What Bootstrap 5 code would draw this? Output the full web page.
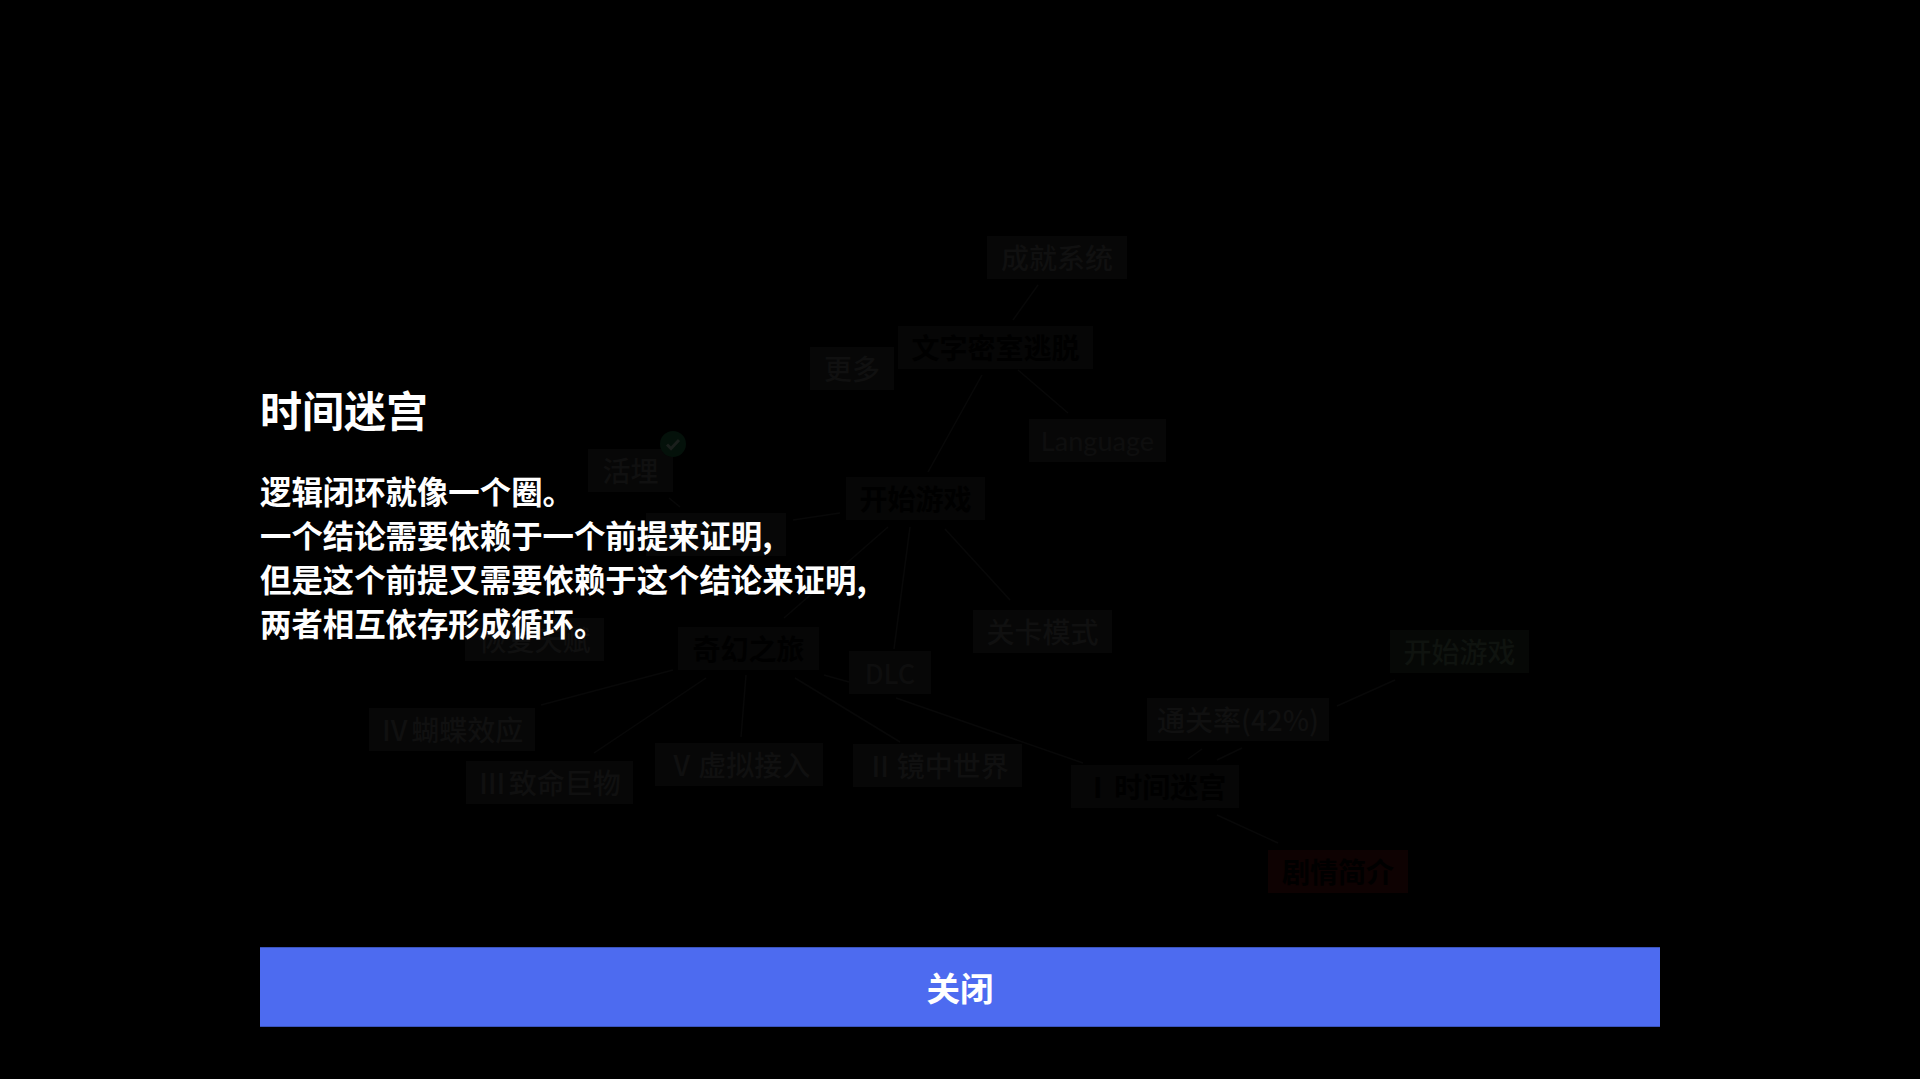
<!DOCTYPE html>
<html lang="zh-CN">
<head>
<meta charset="utf-8">
<title>时间迷宫</title>
<link href="https://cdn.jsdelivr.net/npm/bootstrap@5.3.0/dist/css/bootstrap.min.css" rel="stylesheet">
<style>
html,body{height:100%;background:#000;overflow:hidden;}
body{font-family:"Noto Sans CJK SC","Liberation Sans",sans-serif;color:#fff;}
.stage{width:1920px;height:1079px;background:#000;}
.wires{left:0;top:0;width:1920px;height:1079px;}
.wires line{stroke:#080808;stroke-width:1.5;}
.gnode{height:43px;background:#070707;color:#101010;font-size:28px;line-height:43px;font-weight:500;text-align:center;white-space:nowrap;word-spacing:-4px;}
.gnode.sunk{color:#000;font-weight:700;background:#060606;}
.gnode.faint{color:#0e0e0e;font-size:27px;}
.gnode.win{background:#060806;color:#0f130f;}
.gnode.lose{background:#0e0202;color:#000;font-weight:700;}
.tick{width:26px;height:26px;left:660px;top:431px;background:#04110a;}
.veil{inset:0;z-index:5;}
.sheet{width:1400px;height:1079px;padding-top:385px;padding-bottom:52px;}
.sheet-title{font-size:42px;line-height:48px;font-weight:700;margin:0 0 36px;}
.sheet-copy{font-size:31.4px;line-height:44px;font-weight:700;margin:0;}
.btn.shut{height:80px;background:#4d6bf0;color:#fff;border:0;border-top:1px solid #3a54bd;border-bottom:1px solid #3a54bd;font-size:33.5px;font-weight:700;line-height:1;}
</style>
</head>
<body>
<div class="stage position-relative">
  <svg class="wires position-absolute" viewBox="0 0 1920 1079">
    <line x1="1038" y1="285" x2="1013" y2="320"/>
    <line x1="982" y1="375" x2="928" y2="472"/>
    <line x1="1018" y1="370" x2="1068" y2="413"/>
    <line x1="840" y1="513" x2="793" y2="520"/>
    <line x1="669" y1="498" x2="680" y2="507"/>
    <line x1="888" y1="527" x2="784" y2="618"/>
    <line x1="910" y1="527" x2="894" y2="649"/>
    <line x1="945" y1="529" x2="1010" y2="600"/>
    <line x1="673" y1="670" x2="541" y2="705"/>
    <line x1="706" y1="678" x2="594" y2="753"/>
    <line x1="746" y1="675" x2="741" y2="737"/>
    <line x1="795" y1="678" x2="900" y2="742"/>
    <line x1="824" y1="675" x2="849" y2="682"/>
    <line x1="896" y1="698" x2="1083" y2="763"/>
    <line x1="1395" y1="680" x2="1337" y2="706"/>
    <line x1="1202" y1="749" x2="1188" y2="759"/>
    <line x1="1242" y1="748" x2="1217" y2="760"/>
    <line x1="1217" y1="815" x2="1278" y2="843"/>
  </svg>
  <div class="gnode position-absolute" style="left:987px;top:236px;width:140px">成就系统</div>
  <div class="gnode sunk position-absolute" style="left:898px;top:326px;width:195px">文字密室逃脱</div>
  <div class="gnode position-absolute" style="left:810px;top:347px;width:84px">更多</div>
  <div class="gnode faint position-absolute" style="left:1029px;top:419px;width:137px;font-family:'Lato',sans-serif">Language</div>
  <div class="gnode sunk position-absolute" style="left:846px;top:477px;width:139px">开始游戏</div>
  <div class="gnode position-absolute" style="left:588px;top:449px;width:85px">活埋</div>
  <div class="tick rounded-circle position-absolute d-flex align-items-center justify-content-center">
    <svg width="18" height="18" viewBox="0 0 18 18"><path d="M3 9.5l4 4 8-8.5" fill="none" stroke="#1a1f1c" stroke-width="3"/></svg>
  </div>
  <div class="gnode position-absolute" style="left:646px;top:513px;width:140px"></div>
  <div class="gnode position-absolute" style="left:465px;top:618px;width:139px">恢复天赋</div>
  <div class="gnode sunk position-absolute" style="left:678px;top:627px;width:141px">奇幻之旅</div>
  <div class="gnode faint position-absolute" style="left:849px;top:651px;width:82px">DLC</div>
  <div class="gnode position-absolute" style="left:973px;top:610px;width:139px">关卡模式</div>
  <div class="gnode position-absolute" style="left:369px;top:708px;width:166px">Ⅳ 蝴蝶效应</div>
  <div class="gnode position-absolute" style="left:466px;top:761px;width:167px">Ⅲ 致命巨物</div>
  <div class="gnode position-absolute" style="left:655px;top:743px;width:168px">Ⅴ 虚拟接入</div>
  <div class="gnode position-absolute" style="left:853px;top:744px;width:169px">Ⅱ 镜中世界</div>
  <div class="gnode win position-absolute" style="left:1390px;top:630px;width:139px">开始游戏</div>
  <div class="gnode position-absolute" style="left:1147px;top:698px;width:182px">通关率(42%)</div>
  <div class="gnode sunk position-absolute" style="left:1071px;top:765px;width:168px">Ⅰ 时间迷宫</div>
  <div class="gnode lose position-absolute" style="left:1268px;top:850px;width:140px">剧情简介</div>

  <div class="veil position-absolute">
    <div class="sheet mx-auto d-flex flex-column">
      <h2 class="sheet-title">时间迷宫</h2>
      <p class="sheet-copy flex-grow-1">逻辑闭环就像一个圈。<br>一个结论需要依赖于一个前提来证明,<br>但是这个前提又需要依赖于这个结论来证明,<br>两者相互依存形成循环。</p>
      <button type="button" class="btn shut w-100 rounded-0">关闭</button>
    </div>
  </div>
</div>
<script src="https://cdn.jsdelivr.net/npm/bootstrap@5.3.0/dist/js/bootstrap.bundle.min.js"></script>
</body>
</html>
